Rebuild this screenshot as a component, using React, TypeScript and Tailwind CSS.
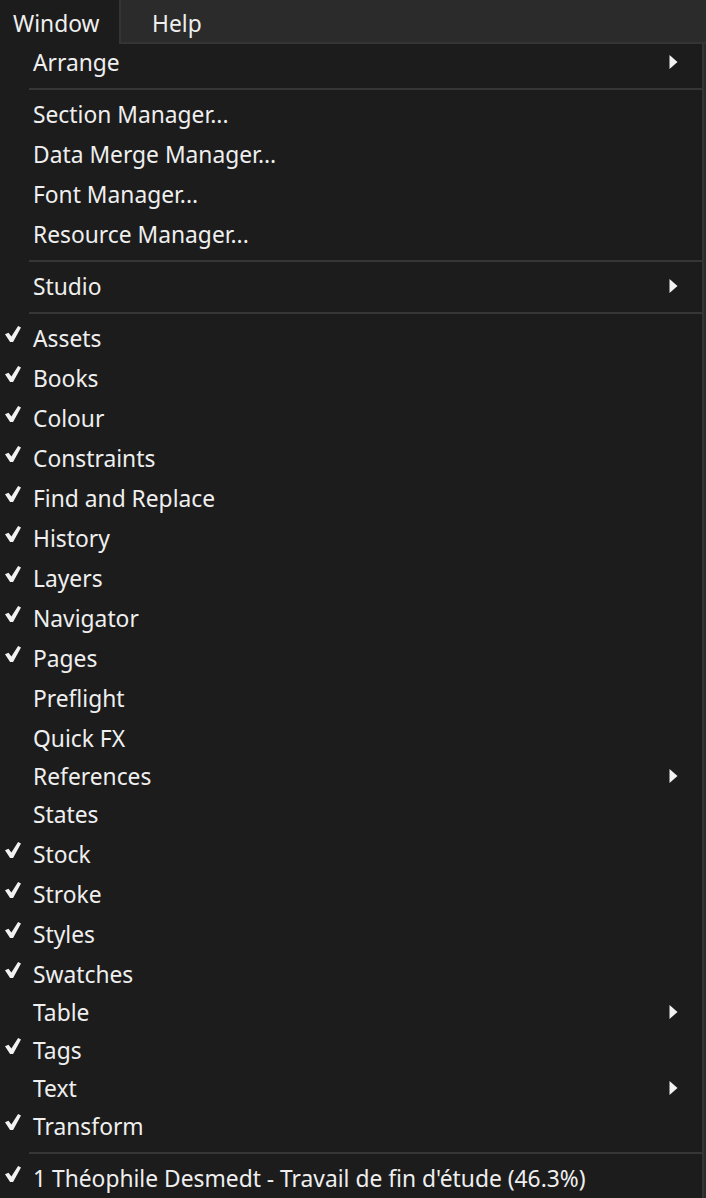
import React from "react";

type Item =
  | { kind: "sep" }
  | { kind: "item"; label: string; checked?: boolean; sub?: boolean; h?: number };

const items: Item[] = [
  { kind: "item", label: "Arrange", sub: true },
  { kind: "sep" },
  { kind: "item", label: "Section Manager..." },
  { kind: "item", label: "Data Merge Manager..." },
  { kind: "item", label: "Font Manager..." },
  { kind: "item", label: "Resource Manager..." },
  { kind: "sep" },
  { kind: "item", label: "Studio", sub: true },
  { kind: "sep" },
  { kind: "item", label: "Assets", checked: true },
  { kind: "item", label: "Books", checked: true },
  { kind: "item", label: "Colour", checked: true },
  { kind: "item", label: "Constraints", checked: true },
  { kind: "item", label: "Find and Replace", checked: true },
  { kind: "item", label: "History", checked: true },
  { kind: "item", label: "Layers", checked: true },
  { kind: "item", label: "Navigator", checked: true },
  { kind: "item", label: "Pages", checked: true },
  { kind: "item", label: "Preflight" },
  { kind: "item", label: "Quick FX" },
  { kind: "item", label: "References", sub: true, h: 36 },
  { kind: "item", label: "States" },
  { kind: "item", label: "Stock", checked: true },
  { kind: "item", label: "Stroke", checked: true },
  { kind: "item", label: "Styles", checked: true },
  { kind: "item", label: "Swatches", checked: true },
  { kind: "item", label: "Table", sub: true, h: 36 },
  { kind: "item", label: "Tags", checked: true },
  { kind: "item", label: "Text", sub: true, h: 36 },
  { kind: "item", label: "Transform", checked: true },
  { kind: "sep" },
  { kind: "item", label: "1 Théophile Desmedt - Travail de fin d'étude (46.3%)", checked: true },
];

function Check() {
  return (
    <svg width="16" height="16" viewBox="0 0 16 16" className="absolute left-[5px] top-1/2 -translate-y-[14px]">
      <path d="M0 8.3 L3.5 6.7 L6.4 10.4 L13.1 0 L16 1.4 L8.1 16 L5.1 16 Z" fill="#f2f2f2" />
    </svg>
  );
}

function Arrow() {
  return (
    <svg width="9" height="14" viewBox="0 0 9 14" className="absolute left-[669px] top-1/2 -translate-y-[9px]">
      <path d="M0.5 0 L8.5 7 L0.5 14 Z" fill="#f2f2f2" />
    </svg>
  );
}

export default function App() {
  return (
    <div
      className="w-[706px] h-[1198px] overflow-hidden bg-[#1c1c1c] text-[#efefef]"
      style={{ fontFamily: '"Noto Sans", "Open Sans", sans-serif' }}
    >
      {/* menu bar */}
      <div className="flex h-[44px]">
        <div className="w-[121px] border-r-2 border-[#343434] bg-[#1c1c1c] pl-[13px] text-[22.8px] leading-[48px]">
          Window
        </div>
        <div className="flex-1 bg-[#2b2b2b] border-b-2 border-[#343434] pl-[31px] text-[22.8px] leading-[47px]">
          Help
        </div>
      </div>

      {/* dropdown */}
      <div className="flex">
        <div className="w-[704px] border-r-2 border-[#343434] bg-[#1c1c1c]">
          {items.map((it, i) =>
            it.kind === "sep" ? (
              <div key={i} className="pl-[29px] pt-[4px] pb-[6px]">
                <div className="h-[2px] bg-[#363636]" />
              </div>
            ) : (
              <div
                key={i}
                className="relative pl-[33px] text-[22.8px] whitespace-nowrap"
                style={{ height: it.h ?? 40, lineHeight: `${(it.h ?? 40) - 3}px` }}
              >
                {it.checked && <Check />}
                {it.label}
                {it.sub && <Arrow />}
              </div>
            )
          )}
        </div>
        <div className="flex-1 bg-[#2b2b2b]" />
      </div>
    </div>
  );
}
